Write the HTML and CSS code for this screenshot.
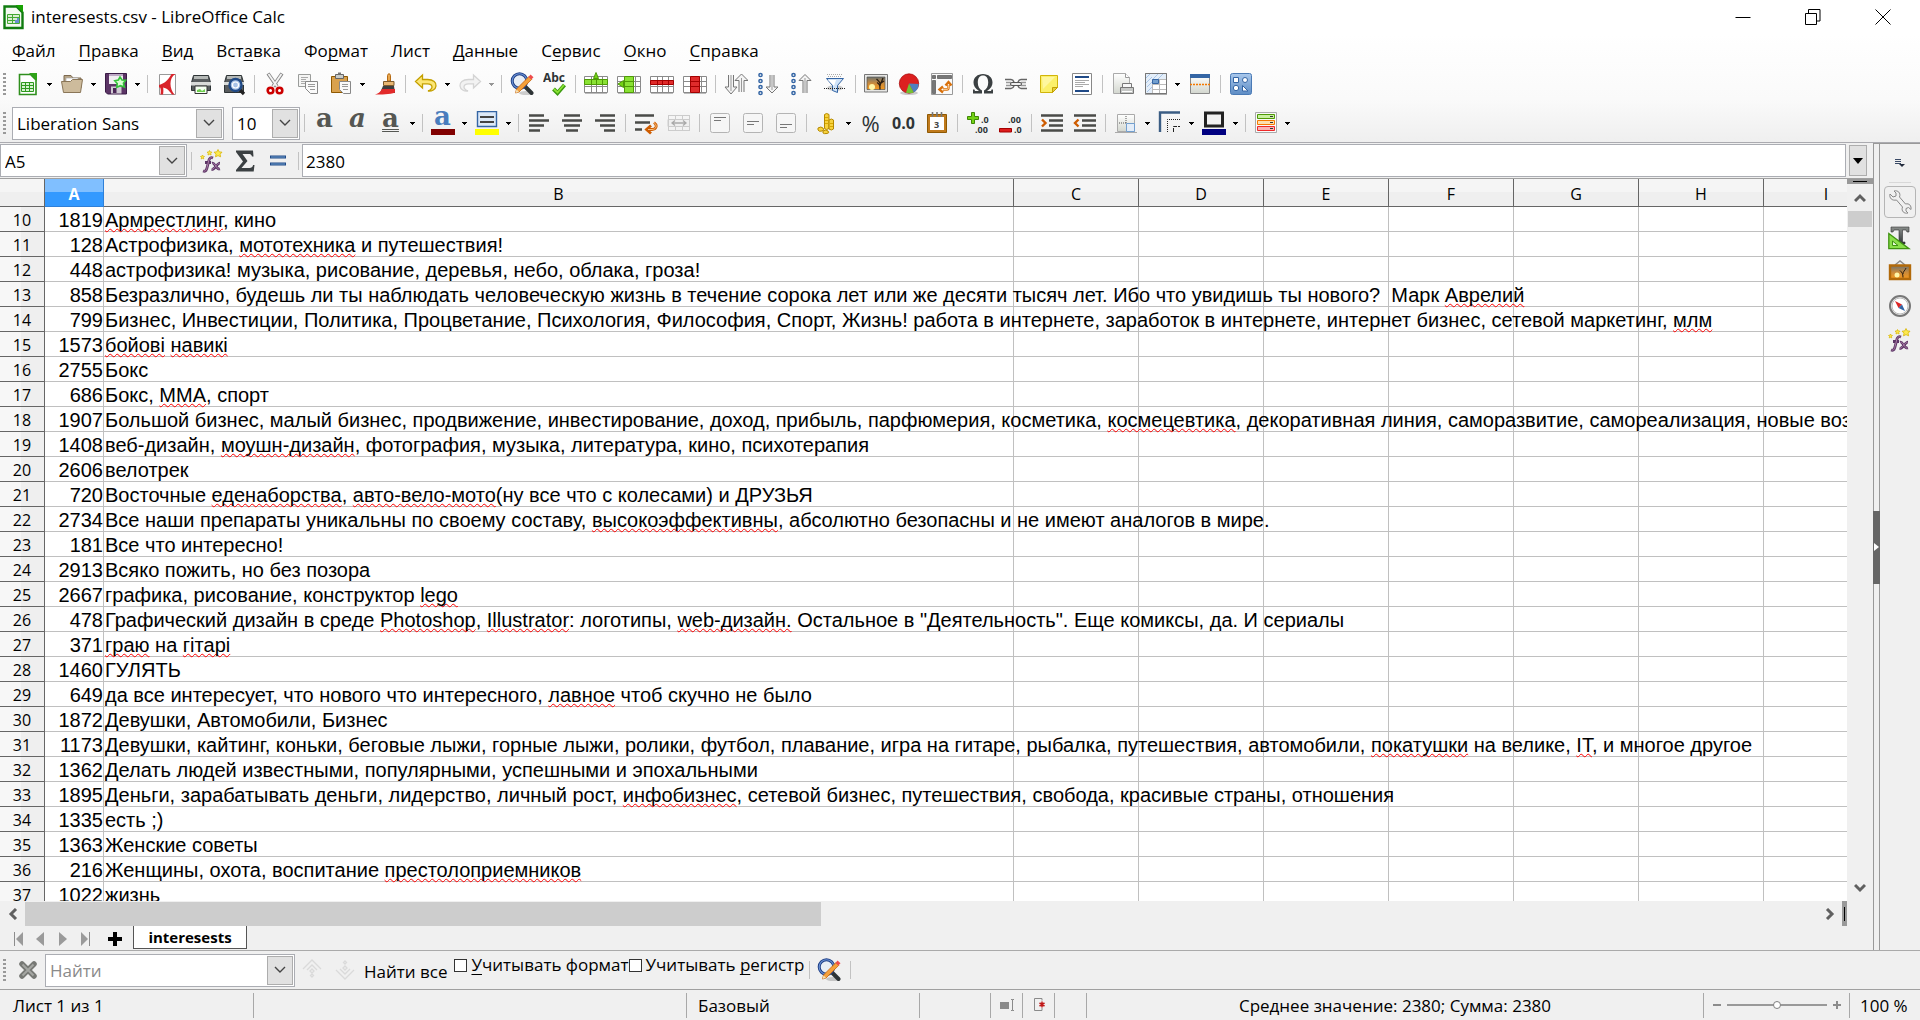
FILE: index.html
```html
<!DOCTYPE html>
<html lang="ru">
<head>
<meta charset="utf-8">
<title>interesests.csv - LibreOffice Calc</title>
<link rel="stylesheet" href="styles.css">
</head>
<body>
<svg class="defs" aria-hidden="true">
  <defs>
    <linearGradient id="g-silver" x1="0" y1="0" x2="0" y2="1"><stop offset="0" stop-color="#fff"/><stop offset="1" stop-color="#d3d7cf"/></linearGradient>
    <linearGradient id="g-blue" x1="0" y1="0" x2="0" y2="1"><stop offset="0" stop-color="#a9c8ec"/><stop offset="1" stop-color="#5d8cc4"/></linearGradient>
    <linearGradient id="g-sunset" x1="0" y1="0" x2="0" y2="1"><stop offset="0" stop-color="#6f7470"/><stop offset=".5" stop-color="#c98a3c"/><stop offset="1" stop-color="#f79a1d"/></linearGradient>
    <linearGradient id="g-dark" x1="0" y1="0" x2="0" y2="1"><stop offset="0" stop-color="#8b8f8c"/><stop offset="1" stop-color="#2e3436"/></linearGradient>
  </defs>
  <symbol id="i-arrow" viewBox="0 0 5 3"><path d="M0 0h5v1H4v1H3v1H2V2H1V1H0z"/></symbol>
  <symbol id="i-chevron" viewBox="0 0 12 8"><path d="M1 1l5 5 5-5" fill="none" stroke="#444" stroke-width="1.4"/></symbol>
  <symbol id="i-fx" viewBox="0 0 24 24">
    <path d="M3 22c3 1 3.600-1 4.500-5l1.500-6c.6-2 2-3 4-2M5 13.500h6" fill="none" stroke="#5c3566" stroke-width="2.800"/>
    <path d="M12 14c3-1 4 7 8 6M20 14c-3 0-5 7-8.500 6.500" fill="none" stroke="#5c3566" stroke-width="2.600"/>
    <path d="M3.500 22c2.500.6 3-1 3.900-5l1.500-6c.6-2 2-2.600 3.500-2M12.500 14.300c3-.6 4 6.500 7 5.700M19.500 14.400c-3 0-5 6-7.500 5.800" fill="none" stroke="#ad7fa8" stroke-width="1"/>
    <path d="M18 .5l1.300 2.400 2.700.3-1.900 2 .5 2.600L18 6.600l-2.500 1.200.5-2.600-1.900-2 2.600-.3z" fill="#fce94f" stroke="#d8b400" stroke-width=".8"/>
    <path d="M9.500 1.500l.8 1.500 1.700.2-1.200 1.200.3 1.600-1.600-.7-1.500.7.300-1.600L7 3.200 8.700 3zM2.500 6l.7 1.300 1.300.2-1 1 .2 1.400-1.200-.6-1.300.6.3-1.400-1-1L1.800 7.300z" fill="#fce94f" stroke="#d8b400" stroke-width=".7"/>
  </symbol>
  <symbol id="i-find" viewBox="0 0 24 24">
    <ellipse cx="16" cy="21" rx="7" ry="2" fill="#000" opacity=".18"/>
    <path d="M15 14.500l6.500 6.500" stroke="#2e3436" stroke-width="4" stroke-linecap="round"/>
    <circle cx="9.500" cy="9" r="7.300" fill="#e8eef6" stroke="#1f3f86" stroke-width="3"/>
    <circle cx="9.500" cy="9" r="7.300" fill="none" stroke="#6b92d6" stroke-width="1.100"/>
    <path d="M5.500 21l1-4L19 4.500l2.800 2.800L9 20z" fill="#f5a03a" stroke="#c4620c" stroke-width=".8"/>
    <path d="M18.500 5l2-2.400 3 2.600-2.200 2.400z" fill="#ef4b4b"/><path d="M5.500 21l1-3.500 2.500 2.300z" fill="#f3e2b8"/>
  </symbol>
  <symbol id="i-grid" viewBox="0 0 24 24"><path d="M.5 4.500h23v16H.5zM.5 9.500h23M.5 14.500h23M7.500 4.500v16M12.500 4.500v16M18.500 4.500v16" fill="#fff" stroke="#8a8a8a" stroke-width="1"/><path d="M1 21.500h22" stroke="#bbb"/></symbol>
</svg>

<header class="top">
  <div class="titlebar">
    <svg class="app-icon" viewBox="0 0 22 26"><path d="M1.500 2.500h12l6 6v15.500h-18z" fill="#f4faf2" stroke="#107c10" stroke-width="2.400"/><path d="M12.500 1h7.500v7.500z" fill="#18a303"/><path d="M4.500 10.500h12v9h-12zM4.500 13.500h12M4.500 16.500h12M9.500 10.500v9" fill="#d9f0d2" stroke="#43a833"/><path d="M12 19v-3h2v-2h2v5z" fill="#6a8fd0"/></svg>
    <h1 class="title">interesests.csv - LibreOffice Calc</h1>
    <button class="win" aria-label="Свернуть"><svg viewBox="0 0 16 16"><path d="M.5 8.500h15" stroke="#000"/></svg></button>
    <button class="win" aria-label="Восстановить"><svg viewBox="0 0 16 16"><path d="M.5 4.500h11v11H.5zM3.500 4V.5h11.500v11.500h-3" fill="none" stroke="#000"/></svg></button>
    <button class="win" aria-label="Закрыть"><svg viewBox="0 0 16 16"><path d="M.5.5l15 15M15.500.5l-15 15" stroke="#000"/></svg></button>
  </div>
  <nav class="menubar">
    <button><u>Ф</u>айл</button><button><u>П</u>равка</button><button><u>В</u>ид</button><button>Вст<u>а</u>вка</button><button>Фо<u>р</u>мат</button><button>Лист</button><button><u>Д</u>анные</button><button>С<u>е</u>рвис</button><button><u>О</u>кно</button><button><u>С</u>правка</button>
  </nav>

  <div class="toolbar" role="toolbar" aria-label="Стандартная">
    <span class="grip"></span>
    <button class="tool" aria-label="Создать"><svg viewBox="0 0 24 24"><path d="M3.500 2.500h11l5.500 5.500v14.500h-16.500z" fill="#fff" stroke="#2f8f1d" stroke-width="1.600"/><path d="M13 1h8v8z" fill="#2fa318"/><path d="M5.500 10.500h12v9h-12zM5.500 13.500h12M5.500 16.500h12M9.500 10.500v9M13.500 10.500v9" fill="#d5f3cf" stroke="#2f9a1f"/></svg></button><button class="drop" aria-label="Создать: ещё"><svg><use href="#i-arrow"/></svg></button>
    <button class="tool" aria-label="Открыть"><svg viewBox="0 0 24 24"><path d="M4 5V3.500h7L13 6h8v10H4z" fill="#b7a587" stroke="#7d6a50"/><path d="M6 6h12v8H6z" fill="#fff" stroke="#aaa" stroke-width=".7"/><path d="M1.500 9.500h9l2-2h10L20.500 20.500h-17z" fill="#cdbb9c" stroke="#8a7658"/></svg></button><button class="drop" aria-label="Открыть: ещё"><svg><use href="#i-arrow"/></svg></button>
    <button class="tool" aria-label="Сохранить"><svg viewBox="0 0 24 24"><path d="M1.500 1.500h21v20.500H3.500l-2-2z" fill="#5c3566" stroke="#3b1c47"/><path d="M5 2h14v10H5z" fill="#f1eef2"/><path d="M5 2h14v2H5z" fill="#bda9c5"/><path d="M7 14.500h10.500v7H7z" fill="#d0cbd3"/><path d="M9 16h3.500v5H9z" fill="#4a2756"/><path d="M16 5l2 3 3.600.3-2.200 2.900 1 3.800-4-1.300-3.600 1.600.4-3.800-2.400-2.800 3.600-.7z" fill="#d9ffd2" stroke="#35c33a" stroke-width="1.600"/></svg></button><button class="drop" aria-label="Сохранить: ещё"><svg><use href="#i-arrow"/></svg></button>
    <span class="sep"></span>
    <button class="tool" aria-label="Экспорт в PDF"><svg viewBox="0 0 24 24"><path d="M3.500 2.500h16v20h-16z" fill="#fff" stroke="#999"/><path d="M19.500 2C12.500 6 13.500 17 18.500 22.500h-2.500C12 17 10.500 15 3 15.500v-2.500C9 11.500 13 7 15.500 2z" fill="#d9232a"/><path d="M3.500 13.500C5 17 5 19 4.500 22.500h2.500c.5-3 .5-5 0-8z" fill="#d9232a"/></svg></button>
    <button class="tool" aria-label="Печать"><svg viewBox="0 0 24 24"><path d="M4.500 3.500h15l2 7v8h-19v-8z" fill="#585c5e" stroke="#2e3436"/><path d="M5 4h14v3H5z" fill="#b4b8b6"/><path d="M2 10h20v3.500H2z" fill="#d8dad8"/><path d="M6 14h12v7.500H6z" fill="#f5fff2" stroke="#333"/><path d="M8 18l3-1 2 2 3-2v3H8z" fill="#6fcf4f"/></svg></button>
    <button class="tool" aria-label="Просмотр печати"><svg viewBox="0 0 24 24"><path d="M4.500 3.500h15l2 7v10h-19v-10z" fill="#585c5e" stroke="#2e3436"/><path d="M5 4h14v3H5z" fill="#b4b8b6"/><path d="M2 10h20v3H2z" fill="#d8dad8"/><path d="M17 17l5 5" stroke="#222" stroke-width="3.200"/><circle cx="13.500" cy="13" r="6" fill="#a9c3e8" stroke="#204a87" stroke-width="2.400"/><circle cx="13.500" cy="13" r="3" fill="none" stroke="#fff" stroke-width="1.200"/></svg></button>
    <span class="sep"></span>
    <button class="tool" aria-label="Вырезать"><svg viewBox="0 0 24 24"><path d="M5 1.500l9 13M19 1.500l-9 13" stroke="#888" stroke-width="3.600"/><path d="M5.500 2l8.500 12.500M18.500 2L10 14.500" stroke="#f4f4f4" stroke-width="1.800"/><circle cx="7.500" cy="18.500" r="2.800" fill="#fff" stroke="#cc0000" stroke-width="2.600"/><circle cx="16.500" cy="18.500" r="2.800" fill="#fff" stroke="#cc0000" stroke-width="2.600"/></svg></button>
    <button class="tool" aria-label="Копировать"><svg viewBox="0 0 24 24"><path d="M2.500 2.500h12v12h-12z" fill="#f5f5f4" stroke="#9a9c9a"/><path d="M5 5.500h7M5 7.500h5M5 9.500h7M5 11.500h4" stroke="#aaa"/><path d="M9.500 9.500h12v12h-7l-5-5z" fill="#fafafa" stroke="#888"/><path d="M12 12.500h7M12 14.500h7M14 17.500h5" stroke="#999"/></svg></button>
    <button class="tool" aria-label="Вставить"><svg viewBox="0 0 24 24"><path d="M2.500 4.500h16v16h-16z" fill="#d9a14d" stroke="#8f5902"/><path d="M6.500 2.500h8v4h-8z" fill="#c9ccc9" stroke="#666"/><path d="M9 1.500h3" stroke="#777" stroke-width="2"/><path d="M10.500 9.500h11v12h-7l-4-4z" fill="#fafafa" stroke="#888"/><path d="M13 12.500h6M13 14.500h6M14 17.500h5" stroke="#999"/></svg></button><button class="drop" aria-label="Вставить: ещё"><svg><use href="#i-arrow"/></svg></button>
    <button class="tool" aria-label="Копировать форматирование"><svg viewBox="0 0 24 24"><path d="M14.500 9V3.500q1.500-4 3 0V9z" fill="#e9a64c" stroke="#b56a14"/><path d="M10.500 9.500h10.500v4H10.500z" fill="#e8b672" stroke="#7c5a2c"/><path d="M10 14h11l1 7H7z" fill="#3d3f40"/><path d="M9 17h13v3.500c-5 2-14 2-20 2 3-1 5-2 7-5.500z" fill="#e22a2a"/></svg></button>
    <span class="sep"></span>
    <button class="tool" aria-label="Отменить"><svg viewBox="0 0 24 24"><path d="M8.500 3v4.500h5c6 0 9 3 8.500 6.500-.4 3.500-4 5.500-8 5 2-.8 4-2 4-4 0-2.500-2-3.200-4.500-3.200h-5V16L1.500 9.500z" fill="#fce675" stroke="#c4a000" stroke-width="1.300"/></svg></button><button class="drop" aria-label="Отменить: ещё"><svg><use href="#i-arrow"/></svg></button>
    <button class="tool" aria-label="Вернуть" disabled><svg viewBox="0 0 24 24"><path d="M15.500 3v4.500h-5c-6 0-9 3-8.500 6.500.4 3.500 4 5.500 8 5-2-.8-4-2-4-4 0-2.500 2-3.200 4.500-3.200h5V16l7-6.500z" fill="#f2f2f2" stroke="#d4d4d4" stroke-width="1.300"/></svg></button><button class="drop" aria-label="Вернуть: ещё" disabled><svg><use href="#i-arrow"/></svg></button>
    <span class="sep"></span>
    <button class="tool" aria-label="Найти и заменить"><svg><use href="#i-find"/></svg></button>
    <button class="tool" aria-label="Орфография"><svg viewBox="0 0 24 24"><text x="0" y="10" class="abc">Abc</text><path d="M10.500 17l4 4 7-8" fill="none" stroke="#3c9a10" stroke-width="4"/><path d="M10.800 17l3.700 3.500 6.500-7.500" fill="none" stroke="#8ae234" stroke-width="1.800"/></svg></button>
    <span class="sep"></span>
    <button class="tool" aria-label="Вставить строку"><svg viewBox="0 0 24 24"><use href="#i-grid"/><path d="M.5 7.500h23v5H.5zM7.500 7.500v5M12.500 7.500v5M18.500 7.500v5" fill="#8ae234" stroke="#4e9a06"/><path d="M9.500 6.500l2.500-6 2.500 6z" fill="#73d216" stroke="#4e9a06"/></svg></button>
    <button class="tool" aria-label="Вставить столбец"><svg viewBox="0 0 24 24"><use href="#i-grid"/><path d="M7.500 4.500h9v16h-9zM7.500 9.500h9M7.500 14.500h9" fill="#8ae234" stroke="#4e9a06"/><path d="M6.500 8.500v7l-5.500-3.500z" fill="#73d216" stroke="#4e9a06"/></svg></button>
    <button class="tool" aria-label="Удалить строку"><svg viewBox="0 0 24 24"><use href="#i-grid"/><path d="M.5 8.500h23v4H.5zM7.500 8.500v4M12.500 8.500v4M18.500 8.500v4" fill="#e02b2b" stroke="#a40000"/></svg></button>
    <button class="tool" aria-label="Удалить столбец"><svg viewBox="0 0 24 24"><use href="#i-grid"/><path d="M7.500 4.500h9v16h-9zM7.500 9.500h9M7.500 14.500h9" fill="#e02b2b" stroke="#a40000"/></svg></button>
    <span class="sep"></span>
    <button class="tool" aria-label="Сортировка"><svg viewBox="0 0 24 24"><path d="M4.500 3v12H1l6 7 6-7H9.500V3" fill="#f4f4f4" stroke="#777"/><path d="M15 20V8.500h-4L17.500 2 24 8.500h-4V20" fill="#f4f4f4" stroke="#777"/><path d="M7 3v16M17.500 6v14" stroke="#999"/></svg></button>
    <button class="tool" aria-label="По возрастанию"><svg viewBox="0 0 24 24"><g fill="#fff" stroke="#3465a4" stroke-width="1.500"><circle cx="3.500" cy="3" r="1.600"/><circle cx="3.500" cy="9" r="1.600"/><circle cx="3.500" cy="15" r="1.600"/><circle cx="3.500" cy="21" r="1.600"/></g><path d="M13 3v12H9l6 6 6-6h-4V3" fill="#f4f4f4" stroke="#777"/><path d="M15 3v15" stroke="#999"/></svg></button>
    <button class="tool" aria-label="По убыванию"><svg viewBox="0 0 24 24"><g fill="#fff" stroke="#3465a4" stroke-width="1.500"><circle cx="3.500" cy="3" r="1.600"/><circle cx="3.500" cy="9" r="1.600"/><circle cx="3.500" cy="15" r="1.600"/><circle cx="3.500" cy="21" r="1.600"/></g><path d="M13 21V8.500H9l6-6 6 6h-4V21" fill="#f4f4f4" stroke="#777"/><path d="M15 6v15" stroke="#999"/></svg></button>
    <button class="tool" aria-label="Автофильтр"><svg viewBox="0 0 24 24"><path d="M4 2.500h16M5 4.500h14" stroke="#aaa" stroke-dasharray="1 1"/><ellipse cx="12" cy="16" rx="8" ry="3" fill="#ccc"/><path d="M3.500 6.500h17l-6 7v7l-5-2v-5z" fill="#cfe2f7" stroke="#3465a4"/><path d="M5 8h8l-2 6z" fill="#fff"/><path d="M1 16.500h22" stroke="#222" stroke-dasharray="1 1"/></svg></button>
    <span class="sep"></span>
    <button class="tool" aria-label="Изображение"><svg viewBox="0 0 24 24"><path d="M.5 2.500h23v17.500H.5z" fill="#e6e6e4" stroke="#777"/><path d="M3 5h18v12.500H3z" fill="url(#g-sunset)" stroke="#555" stroke-width=".7"/><circle cx="8" cy="15" r="3" fill="#fff6a8"/><path d="M16 17.500c0-4 0-5-3-7M16 14c0-3 2-4 3-8M16.500 12c-1-3-3-4-4-5M17 11l3-2" stroke="#2b1d10" fill="none" stroke-width="1.300"/></svg></button>
    <button class="tool" aria-label="Диаграмма"><svg viewBox="0 0 24 24"><ellipse cx="12" cy="21" rx="9" ry="2" fill="#ccc"/><circle cx="12" cy="11.500" r="9.700" fill="#dc2020" stroke="#a40000" stroke-width=".7"/><path d="M12 11.500l9.700.5c0 4-2 7-5 8.500z" fill="#4f7fc0"/><path d="M12 11.500l4.700 9c-2.500 1-5 1-7.700.3z" fill="#73c232"/></svg></button>
    <button class="tool" aria-label="Сводная таблица"><svg viewBox="0 0 24 24"><path d="M1.500 1.500h21v21h-21z" fill="#fafafa" stroke="#999"/><path d="M2.500 3.500h3v3h-3zM7.500 3.500h14v3h-14zM2.500 8.500h3v13h-3z" fill="#777" stroke="#555" stroke-width=".7"/><path d="M13 17.500h4q1.500 0 1.500-2V13M13 14.500l-3.500 3 3.500 3M15.500 13.500l3-3.500 3 3.500" fill="none" stroke="#d9700a" stroke-width="2.400"/><path d="M13 17.500h4q1.500 0 1.500-2V13" fill="none" stroke="#ffd9a8" stroke-width=".8"/></svg></button>
    <span class="sep"></span>
    <button class="tool" aria-label="Специальный символ"><svg viewBox="0 0 24 24"><path d="M2 21.500v-4h1.500l.5 1.500h4C4 16.500 2.500 13.500 2.500 10.500 2.500 5.500 6.500 2 12 2s9.500 3.500 9.500 8.500c0 3-1.500 6-5.500 8.500h4l.5-1.500H22v4h-9v-3c2.600-1.500 4.200-4 4.200-8 0-4.500-2-7-5.200-7s-5.200 2.500-5.200 7c0 4 1.600 6.500 4.200 8v3z" fill="#3b4042"/></svg></button>
    <button class="tool" aria-label="Гиперссылка"><svg viewBox="0 0 24 24"><path d="M1 7.500h6q2 0 3 2.500M1 16.500h6q2 0 3-2.500M23 7.500h-6q-2 0-3 2.500M23 16.500h-6q-2 0-3-2.500" fill="none" stroke="#666" stroke-width="1.500"/><path d="M2 10.500h5M2 13.500h5M22 10.500h-5M22 13.500h-5" stroke="#999" stroke-width="1.500"/><rect x="6.500" y="10.500" width="11" height="3" rx="1.500" fill="#eee" stroke="#555"/></svg></button>
    <button class="tool" aria-label="Комментарий"><svg viewBox="0 0 24 24"><path d="M3.500 3.500h17v12l-5 5h-12z" fill="#fbf06a" stroke="#d1b40a"/><path d="M20.500 15.500h-5v5z" fill="#e3cf3d" stroke="#c4a000"/><path d="M5 5h13L6 17z" fill="#fff9b5" opacity=".7"/></svg></button>
    <button class="tool" aria-label="Колонтитулы"><svg viewBox="0 0 24 24"><path d="M2.500 1.500h19v21h-19z" fill="#fff" stroke="#888"/><path d="M5 5h14M5 19h14" stroke="#204a87" stroke-width="2"/><path d="M5 8.500h14M5 10.500h10M5 12.500h14M5 14.500h8" stroke="#aaa"/></svg></button>
    <span class="sep"></span>
    <button class="tool" aria-label="Область печати"><svg viewBox="0 0 24 24"><path d="M2.500 1.500h12l4 4v16h-16z" fill="url(#g-silver)" stroke="#aaa"/><path d="M14.500 1.500v4h4" fill="#fff" stroke="#999"/><path d="M11.500 11.500h9v4h-9z" fill="#f6f6f6" stroke="#777"/><path d="M9.500 15.500h13v6h-13z" fill="#c6c8c6" stroke="#777"/><path d="M11 19.500h10" stroke="#fff"/></svg></button>
    <button class="tool" aria-label="Закрепить"><svg viewBox="0 0 24 24"><path d="M1.500 1.500h21v20h-21z" fill="#fff" stroke="#888"/><path d="M2 2h20v5H8v14H2z" fill="#e4eef9"/><path d="M2 6l4-4M2 11l6-6M3 15l5-5M3 20l5-5M9 7l5-5M14 7l5-5" stroke="#a9c6e8"/><path d="M8.500 7v14M8 7.500h14M15.500 7v14M8 12.500h14M8 17.500h14" stroke="#bbb"/><path d="M8.500 7.500h6v4h-6z" fill="#729fcf" stroke="#3465a4"/><path d="M1.500 1.500h21v20h-21z" fill="none" stroke="#777"/><path d="M1 22.500h22" stroke="#aaa"/></svg></button><button class="drop" aria-label="Закрепить: ещё"><svg><use href="#i-arrow"/></svg></button>
    <button class="tool" aria-label="Разделить окно"><svg viewBox="0 0 24 24"><path d="M2.500 2.500h19v19h-19z" fill="url(#g-silver)" stroke="#888"/><path d="M2 2h20v4H2z" fill="#3465a4"/><path d="M2 12.500h20" stroke="#f57900" stroke-width="1.500" stroke-dasharray="2 1"/></svg></button>
    <span class="sep"></span>
    <button class="tool" aria-label="Фигуры"><svg viewBox="0 0 24 24"><rect x="1.500" y="1.500" width="21" height="21" rx="2" fill="url(#g-blue)" stroke="#4a7ab5"/><g fill="#fff" stroke="#3465a4"><path d="M4.500 5.500h5v5h-5z"/><circle cx="16" cy="8" r="2.500"/><circle cx="7" cy="16" r="2.700"/><path d="M13.500 13.500v5.500h5.500z"/></g></svg></button>
  </div>

  <div class="toolbar format" role="toolbar" aria-label="Форматирование">
    <span class="grip"></span>
    <span class="combo font-name"><select aria-label="Имя шрифта"><option>Liberation Sans</option></select><span class="combo-btn"><svg><use href="#i-chevron"/></svg></span></span>
    <span class="combo font-size"><select aria-label="Размер шрифта"><option>10</option></select><span class="combo-btn"><svg><use href="#i-chevron"/></svg></span></span>
    <span class="sep"></span>
    <button class="tool glyph bold" aria-label="Полужирный">a</button>
    <button class="tool glyph italic" aria-label="Курсив">a</button>
    <button class="tool glyph under" aria-label="Подчёркивание">a</button><button class="drop" aria-label="Подчёркивание: ещё"><svg><use href="#i-arrow"/></svg></button>
    <span class="sep"></span>
    <button class="tool glyph color" aria-label="Цвет шрифта">a</button><button class="drop" aria-label="Цвет шрифта: ещё"><svg><use href="#i-arrow"/></svg></button>
    <button class="tool" aria-label="Цвет фона"><svg viewBox="0 0 24 24"><path d="M2.500.5h19v15h-19z" fill="#dce9f8" stroke="#3465a4" stroke-width="1.400"/><path d="M5 6h14M5 11h14" stroke="#444" stroke-width="2"/><path d="M0 18h24v6H0z" fill="#ff0"/></svg></button><button class="drop" aria-label="Цвет фона: ещё"><svg><use href="#i-arrow"/></svg></button>
    <span class="sep"></span>
    <button class="tool" aria-label="По левому краю"><svg viewBox="0 0 24 24"><path d="M2 4.500h15M2 9.500h20M2 14.500h15M2 19.500h11" class="bars"/></svg></button>
    <button class="tool" aria-label="По центру"><svg viewBox="0 0 24 24"><path d="M4 4.500h16M2 9.500h20M4 14.500h16M6 19.500h12" class="bars"/></svg></button>
    <button class="tool" aria-label="По правому краю"><svg viewBox="0 0 24 24"><path d="M7 4.500h15M2 9.500h20M7 14.500h15M11 19.500h11" class="bars"/></svg></button>
    <span class="sep"></span>
    <button class="tool" aria-label="Перенос текста"><svg viewBox="0 0 24 24"><path d="M1 4.500h19M1 11.500h15M1 18.500h7" class="bars"/><path d="M20 11.500c4 3 2 7-2 7h-4M17 14.500l-4.500 4 4.500 4" fill="none" stroke="#ce5c00" stroke-width="2.800"/><path d="M20 11.500c4 3 2 7-2 7h-4" fill="none" stroke="#fcc98c" stroke-width=".9"/></svg></button>
    <button class="tool" aria-label="Объединить ячейки" disabled><svg viewBox="0 0 24 24"><path d="M1.500 4v16M1 4.500h21.500M1 19.500h21.500M22.500 4v16M8.500 4v4M15.500 4v4M8.500 16v4M15.500 16v4M1 8.500h21.500v7H1z" fill="#efefef" stroke="#ccc"/><path d="M5 12h14M8 9.500L5 12l3 2.500M16 9.500l3 2.500-3 2.500" fill="none" stroke="#aaa" stroke-width="1.300"/></svg></button>
    <span class="sep"></span>
    <button class="tool" aria-label="По верхнему краю"><svg viewBox="0 0 24 24"><rect x="2.500" y="2.500" width="19" height="19" rx="2" class="valign"/><path d="M6 6.500h12M6 9.500h7" stroke="#777"/></svg></button>
    <button class="tool" aria-label="По центру по вертикали"><svg viewBox="0 0 24 24"><rect x="2.500" y="2.500" width="19" height="19" rx="2" class="valign"/><path d="M6 10.500h12M6 13.500h7" stroke="#777"/></svg></button>
    <button class="tool" aria-label="По нижнему краю"><svg viewBox="0 0 24 24"><rect x="2.500" y="2.500" width="19" height="19" rx="2" class="valign"/><path d="M6 13.500h12M6 16.500h7" stroke="#777"/></svg></button>
    <span class="sep"></span>
    <button class="tool" aria-label="Денежный"><svg viewBox="0 0 24 24"><path d="M9.500 3.500q2-2 4.500 0v14q-2.500 2-4.500 0z" fill="#f7d23e" stroke="#b58900"/><path d="M14 9q2.500-2 4.500 0v9q-2 2-4.500 0zM3 17q3-2 5 0t-1 3-4-1zM8 20q3-2 5 0t-1 2.500-4-.5z" fill="#f7d23e" stroke="#b58900"/><path d="M10 6.500h3.500M10 9.500h3.500M10 12.500h3.500M15 12.500h3M15 15.500h3" stroke="#d8a800"/></svg></button><button class="drop" aria-label="Денежный: ещё"><svg><use href="#i-arrow"/></svg></button>
    <button class="tool percent" aria-label="Процентный">%</button>
    <button class="tool number" aria-label="Числовой">0.0</button>
    <button class="tool" aria-label="Дата"><svg viewBox="0 0 24 24"><path d="M2.500 3.500h19v18h-19z" fill="#c07a1c" stroke="#8f5902"/><path d="M5 6h14v13H5z" fill="#fff"/><path d="M7.500 1v5M12 1v5M16.500 1v5" stroke="#777" stroke-width="1.600"/><text x="9" y="17" class="tiny">3</text></svg></button>
    <span class="sep"></span>
    <button class="tool" aria-label="Добавить разряд"><svg viewBox="0 0 24 24"><path d="M5.500 1.500h3v4h4v3h-4v4h-3v-4h-4v-3h4z" fill="#73d216" stroke="#3f8705"/><text x="15" y="12" class="dec">.0</text><text x="9" y="22" class="dec">.00</text></svg></button>
    <button class="tool" aria-label="Удалить разряд"><svg viewBox="0 0 24 24"><path d="M.5 17.500h12v3.500h-12z" fill="#dd1c1c" stroke="#a40000"/><text x="9" y="12" class="dec">.00</text><text x="15" y="22" class="dec">.0</text></svg></button>
    <span class="sep"></span>
    <button class="tool" aria-label="Увеличить отступ"><svg viewBox="0 0 24 24"><path d="M1 4.500h22M9 9.500h14M9 14.500h14M1 19.500h22" class="bars"/><path d="M2 8.500l3.500 3.500L2 15.500" fill="none" stroke="#ce5c00" stroke-width="2.400"/></svg></button>
    <button class="tool" aria-label="Уменьшить отступ"><svg viewBox="0 0 24 24"><path d="M1 4.500h22M9 9.500h14M9 14.500h14M1 19.500h22" class="bars"/><path d="M5.500 8.500L2 12l3.500 3.500" fill="none" stroke="#ce5c00" stroke-width="2.400"/></svg></button>
    <span class="sep"></span>
    <button class="tool" aria-label="Обрамление"><svg viewBox="0 0 24 24"><path d="M3.500 3.500h17v17h-17z" fill="url(#g-silver)" stroke="#aaa"/><path d="M12 5v7M5 12h7" stroke="#555" stroke-dasharray="1 1"/><path d="M12.500 12.500h8v8h-8z" fill="#e4edf8" stroke="#729fcf"/><path d="M1 21.500h22" stroke="#aaa"/></svg></button><button class="drop" aria-label="Обрамление: ещё"><svg><use href="#i-arrow"/></svg></button>
    <button class="tool" aria-label="Стиль обрамления"><svg viewBox="0 0 24 24"><path d="M2 21V1.500h20" fill="none" stroke="#3b5d84" stroke-width="2.400"/><path d="M9.500 21V8.500H22" fill="none" stroke="#222" stroke-dasharray="1 1"/><path d="M15.500 21v-5.500H22" fill="none" stroke="#222" stroke-dasharray="4 1"/></svg></button><button class="drop" aria-label="Стиль обрамления: ещё"><svg><use href="#i-arrow"/></svg></button>
    <button class="tool" aria-label="Цвет обрамления"><svg viewBox="0 0 24 24"><path d="M3.500 2h17v13h-17z" fill="#f2f2f2" stroke="#222" stroke-width="3"/><path d="M0 18h24v6H0z" fill="#000080"/></svg></button><button class="drop" aria-label="Цвет обрамления: ещё"><svg><use href="#i-arrow"/></svg></button>
    <span class="sep"></span>
    <button class="tool" aria-label="Условное форматирование"><svg viewBox="0 0 24 24"><path d="M1.500 1.500h21v20h-21z" fill="#fafafa" stroke="#aaa"/><path d="M3.500 3.500h17v4h-17z" fill="#c9f0a0" stroke="#4e9a06"/><path d="M3.500 9.500h17v4h-17z" fill="#fde0b0" stroke="#f57900"/><path d="M3.500 15.500h17v4h-17z" fill="#f9b4b4" stroke="#ef2929"/><path d="M16 5.500h3M16 11.500h3M16 17.500h3" stroke="#333"/></svg></button><button class="drop" aria-label="Условное форматирование: ещё"><svg><use href="#i-arrow"/></svg></button>
  </div>
</header>

<div class="workspace">
  <main class="document">
    <div class="formula-bar">
      <span class="combo name-box"><input type="text" value="A5" aria-label="Область"><button class="combo-btn" aria-label="Список имён"><svg><use href="#i-chevron"/></svg></button></span>
      <span class="sep"></span>
      <button class="tool" aria-label="Мастер функций"><svg><use href="#i-fx"/></svg></button>
      <button class="tool" aria-label="Сумма"><svg viewBox="0 0 24 24"><path d="M3 1.500h17l.5 6H19c-.6-2-1.500-2.500-3.500-2.500H9.500l5 7-6 7h8c2 0 3-.8 3.600-3h1.400l-.8 6.500H3v-1.500l7-8.500L3 3z" fill="#3b4042"/></svg></button>
      <button class="tool" aria-label="Формула"><svg viewBox="0 0 24 24"><path d="M4 8h16M4 15h16" stroke="#204a87" stroke-width="3"/><path d="M5 8h14M5 15h14" stroke="#729fcf"/></svg></button>
      <span class="sep"></span>
      <input class="formula" type="text" value="2380" aria-label="Строка ввода">
      <button class="expand" aria-label="Развернуть"><svg viewBox="0 0 10 6"><path d="M0 0h10L5 6z"/></svg></button>
    </div>

    <div class="sheet">
      <div class="cells">
        <table>
          <colgroup><col class="c-head"><col class="c-a"><col class="c-b"><col class="c-n"><col class="c-n"><col class="c-n"><col class="c-n"><col class="c-n"><col class="c-n"><col class="c-n"></colgroup>
          <thead><tr><th class="corner"></th><th class="selected">A</th><th>B</th><th>C</th><th>D</th><th>E</th><th>F</th><th>G</th><th>H</th><th>I</th></tr></thead>
          <tbody>
          <tr><th>10</th><td>1819</td><td><s>Армрестлинг</s>, кино</td><td></td><td></td><td></td><td></td><td></td><td></td><td></td></tr>
          <tr><th>11</th><td>128</td><td>Астрофизика, <s>мототехника</s> и путешествия!</td><td></td><td></td><td></td><td></td><td></td><td></td><td></td></tr>
          <tr><th>12</th><td>448</td><td>астрофизика! музыка, рисование, деревья, небо, облака, гроза!</td><td></td><td></td><td></td><td></td><td></td><td></td><td></td></tr>
          <tr><th>13</th><td>858</td><td>Безразлично, будешь ли ты наблюдать человеческую жизнь в течение сорока лет или же десяти тысяч лет. Ибо что увидишь ты нового?&nbsp; Марк <s>Аврелий</s></td><td></td><td></td><td></td><td></td><td></td><td></td><td></td></tr>
          <tr><th>14</th><td>799</td><td>Бизнес, Инвестиции, Политика, Процветание, Психология, Философия, Спорт, Жизнь! работа в интернете, заработок в интернете, интернет бизнес, сетевой маркетинг, <s>млм</s></td><td></td><td></td><td></td><td></td><td></td><td></td><td></td></tr>
          <tr><th>15</th><td>1573</td><td><s>бойові</s> <s>навикі</s></td><td></td><td></td><td></td><td></td><td></td><td></td><td></td></tr>
          <tr><th>16</th><td>2755</td><td>Бокс</td><td></td><td></td><td></td><td></td><td></td><td></td><td></td></tr>
          <tr><th>17</th><td>686</td><td>Бокс, <s>ММА</s>, спорт</td><td></td><td></td><td></td><td></td><td></td><td></td><td></td></tr>
          <tr><th>18</th><td>1907</td><td>Большой бизнес, малый бизнес, продвижение, инвестирование, доход, прибыль, парфюмерия, косметика, <s>космецевтика</s>, декоративная линия, саморазвитие, самореализация, новые возможности</td><td></td><td></td><td></td><td></td><td></td><td></td><td></td></tr>
          <tr><th>19</th><td>1408</td><td>веб-дизайн, <s>моушн-дизайн</s>, фотография, музыка, литература, кино, психотерапия</td><td></td><td></td><td></td><td></td><td></td><td></td><td></td></tr>
          <tr><th>20</th><td>2606</td><td>велотрек</td><td></td><td></td><td></td><td></td><td></td><td></td><td></td></tr>
          <tr><th>21</th><td>720</td><td>Восточные <s>еденаборства</s>, <s>авто-вело-мото</s>(ну все что с колесами) и ДРУЗЬЯ</td><td></td><td></td><td></td><td></td><td></td><td></td><td></td></tr>
          <tr><th>22</th><td>2734</td><td>Все наши препараты уникальны по своему составу, <s>высокоэффективны</s>, абсолютно безопасны и не имеют аналогов в мире.</td><td></td><td></td><td></td><td></td><td></td><td></td><td></td></tr>
          <tr><th>23</th><td>181</td><td>Все что интересно!</td><td></td><td></td><td></td><td></td><td></td><td></td><td></td></tr>
          <tr><th>24</th><td>2913</td><td>Всяко пожить, но без позора</td><td></td><td></td><td></td><td></td><td></td><td></td><td></td></tr>
          <tr><th>25</th><td>2667</td><td>графика, рисование, конструктор <s>lego</s></td><td></td><td></td><td></td><td></td><td></td><td></td><td></td></tr>
          <tr><th>26</th><td>478</td><td>Графический дизайн в среде <s>Photoshop</s>, <s>Illustrator</s>: логотипы, <s>web-дизайн.</s> Остальное в "Деятельность". Еще комиксы, да. И сериалы</td><td></td><td></td><td></td><td></td><td></td><td></td><td></td></tr>
          <tr><th>27</th><td>371</td><td><s>граю</s> на <s>гітарі</s></td><td></td><td></td><td></td><td></td><td></td><td></td><td></td></tr>
          <tr><th>28</th><td>1460</td><td>ГУЛЯТЬ</td><td></td><td></td><td></td><td></td><td></td><td></td><td></td></tr>
          <tr><th>29</th><td>649</td><td>да все интересует, что нового что интересного, <s>лавное</s> чтоб скучно не было</td><td></td><td></td><td></td><td></td><td></td><td></td><td></td></tr>
          <tr><th>30</th><td>1872</td><td>Девушки, Автомобили, Бизнес</td><td></td><td></td><td></td><td></td><td></td><td></td><td></td></tr>
          <tr><th>31</th><td>1173</td><td>Девушки, кайтинг, коньки, беговые лыжи, горные лыжи, ролики, футбол, плавание, игра на гитаре, рыбалка, путешествия, автомобили, <s>покатушки</s> на велике, <s>IT</s>, и многое другое</td><td></td><td></td><td></td><td></td><td></td><td></td><td></td></tr>
          <tr><th>32</th><td>1362</td><td>Делать людей известными, популярными, успешными и эпохальными</td><td></td><td></td><td></td><td></td><td></td><td></td><td></td></tr>
          <tr><th>33</th><td>1895</td><td>Деньги, зарабатывать деньги, лидерство, личный рост, <s>инфобизнес</s>, сетевой бизнес, путешествия, свобода, красивые страны, отношения</td><td></td><td></td><td></td><td></td><td></td><td></td><td></td></tr>
          <tr><th>34</th><td>1335</td><td>есть ;)</td><td></td><td></td><td></td><td></td><td></td><td></td><td></td></tr>
          <tr><th>35</th><td>1363</td><td>Женские советы</td><td></td><td></td><td></td><td></td><td></td><td></td><td></td></tr>
          <tr><th>36</th><td>216</td><td>Женщины, охота, воспитание <s>престолоприемников</s></td><td></td><td></td><td></td><td></td><td></td><td></td><td></td></tr>
          <tr><th>37</th><td>1022</td><td>жизнь</td><td></td><td></td><td></td><td></td><td></td><td></td><td></td></tr>
          </tbody>
        </table>
      </div>
      <div class="vscroll">
        <span class="vsplit"></span>
        <button class="scroll-btn" aria-label="Вверх"><svg viewBox="0 0 12 12"><path d="M1 9l5-5 5 5" fill="none" stroke="#606060" stroke-width="3"/></svg></button>
        <span class="thumb"></span>
        <span class="track"></span>
        <button class="scroll-btn" aria-label="Вниз"><svg viewBox="0 0 12 12"><path d="M1 3l5 5 5-5" fill="none" stroke="#606060" stroke-width="3"/></svg></button>
      </div>
    </div>

    <div class="hscroll">
      <button class="scroll-btn" aria-label="Влево"><svg viewBox="0 0 12 12"><path d="M9 1L4 6l5 5" fill="none" stroke="#606060" stroke-width="3"/></svg></button>
      <span class="track"><span class="thumb"></span></span>
      <button class="scroll-btn" aria-label="Вправо"><svg viewBox="0 0 12 12"><path d="M3 1l5 5-5 5" fill="none" stroke="#606060" stroke-width="3"/></svg></button>
      <span class="hsplit"></span>
    </div>

    <div class="tabs">
      <button class="nav" aria-label="Первый лист"><svg viewBox="0 0 12 14"><path d="M1.500 0v14" stroke="#8c8c8c"/><path d="M10 0v14L3 7z" fill="#9a9a9a"/></svg></button>
      <button class="nav" aria-label="Предыдущий лист"><svg viewBox="0 0 12 14"><path d="M9 0v14L1 7z" fill="#9a9a9a"/></svg></button>
      <button class="nav" aria-label="Следующий лист"><svg viewBox="0 0 12 14"><path d="M2 0v14l8-7z" fill="#9a9a9a"/></svg></button>
      <button class="nav" aria-label="Последний лист"><svg viewBox="0 0 12 14"><path d="M10.500 0v14" stroke="#8c8c8c"/><path d="M2 0v14l7-7z" fill="#9a9a9a"/></svg></button>
      <button class="add" aria-label="Добавить лист"><svg viewBox="0 0 16 16"><path d="M8 1v14M1 8h14" stroke="#000" stroke-width="4"/></svg></button>
      <button class="tab">interesests</button>
    </div>
  </main>

  <div class="splitter"><button class="handle" aria-label="Скрыть"><svg viewBox="0 0 5 8"><path d="M0 0l5 4-5 4z" fill="#fff"/></svg></button></div>

  <aside class="sidebar">
    <button class="side-menu" aria-label="Меню"><svg viewBox="0 0 10 10"><path d="M0 1.500h6M0 3.500h6M0 5.500h6" stroke="#3a4a66"/><path d="M4 6h6L7 9z" fill="#222b3c"/></svg></button>
    <button class="side active" aria-label="Свойства"><svg viewBox="0 0 24 24"><path d="M2 4l3 3 3-1V3L6 1c4-1 7 2 5.500 6l6 7c4-1 6 2 5.500 5.500l-2.500-2-2.500 1v2.500l2 2c-4 1-7-2-5.500-6L8.500 10C4 11 1 8 2 4z" fill="#f0f0f0" stroke="#888"/></svg></button>
    <button class="side" aria-label="Стили"><svg viewBox="0 0 24 24"><path d="M3 1h18v5h-2l-1-2h-3.500v12H17v2H9v-2h2V4H6L5 6H3z" fill="url(#g-dark)" stroke="#333" stroke-width=".6"/><path d="M.8 7.500v15.200H21z" fill="#8ae04a" stroke="#3f9210" stroke-width="1.300"/><path d="M4.500 15v4.500h5.500z" fill="#e8fbd8" stroke="#3f9210"/></svg></button>
    <button class="side" aria-label="Галерея"><svg viewBox="0 0 24 24"><path d="M7 5l5-4 5 4" fill="none" stroke="#888" stroke-width="1.500"/><path d="M2 5.500h20v13.500H2z" fill="url(#g-sunset)" stroke="#b26a0a" stroke-width="2.400"/><circle cx="9" cy="15" r="2.500" fill="#fff6a8"/><path d="M15 17.500c0-4-1-5-3-7M15 14c0-3 2-3 3-6" stroke="#2b1d10" fill="none"/></svg></button>
    <button class="side" aria-label="Навигатор"><svg viewBox="0 0 24 24"><circle cx="12" cy="12" r="10" fill="#f6f6f6" stroke="#777" stroke-width="2"/><circle cx="12" cy="12" r="8" fill="#fff" stroke="#bbb"/><path d="M7 7l7 3.500-3.500 3.500z" fill="#dc2424"/><path d="M17 17l-3-6.500-3.500 3.500z" fill="#3465a4"/></svg></button>
    <button class="side" aria-label="Функции"><svg><use href="#i-fx"/></svg></button>
  </aside>
</div>

<div class="findbar">
  <span class="grip"></span>
  <button class="tool" aria-label="Закрыть панель"><svg viewBox="0 0 24 24"><path d="M6 6l12 12M18 6L6 18" stroke="#777975" stroke-width="5.500" stroke-linecap="round"/><path d="M6.500 6.500l11 11M17.500 6.500l-11 11" stroke="#a5a7a3" stroke-width="2"/></svg></button>
  <span class="combo find"><input type="text" placeholder="Найти" aria-label="Найти"><button class="combo-btn" aria-label="История поиска"><svg><use href="#i-chevron"/></svg></button></span>
  <button class="tool" aria-label="Найти предыдущее" disabled><svg viewBox="0 0 24 24"><path d="M3 11l9-9 9 9M7 12l5-5 5 5M12 11l2 2-2 2-2-2zM12 16l1.500 1.500L12 19l-1.500-1.500z" fill="none" stroke="#dadada" stroke-width="1.300"/></svg></button>
  <button class="tool" aria-label="Найти следующее" disabled><svg viewBox="0 0 24 24"><path d="M3 12l9 9 9-9M7 11l5 5 5-5M12 8l2 2-2 2-2-2zM12 3l1.500 1.500L12 6l-1.500-1.500z" fill="none" stroke="#dadada" stroke-width="1.300"/></svg></button>
  <button class="find-all">Найти все</button>
  <label class="check"><input type="checkbox"><span><u>У</u>читывать формат</span></label>
  <label class="check"><input type="checkbox"><span>Учитывать <u>р</u>егистр</span></label>
  <span class="sep"></span>
  <button class="tool" aria-label="Найти и заменить"><svg><use href="#i-find"/></svg></button>
  <span class="sep"></span>
</div>

<footer class="status">
  <span class="cell sheet-no">Лист 1 из 1</span>
  <span class="cell blank"></span>
  <span class="cell style">Базовый</span>
  <span class="cell lang"></span>
  <span class="cell mark"><svg viewBox="0 0 16 16"><path d="M1 5h9v7H1z" fill="#8a8a8a"/><path d="M12 2.500h1.500v11H12M13.500 2.500H15M13.500 13.500H15" fill="none" stroke="#8a8a8a"/></svg></span>
  <span class="cell mark"><svg viewBox="0 0 16 16"><path d="M11 1.500H3.500v12H11M11 1.500v2M11 11v2.500" fill="none" stroke="#8a8a8a"/><path d="M11 4.500v6M8.500 6l5 3M13.500 6l-5 3" stroke="#c01818" stroke-width="1.500"/></svg></span>
  <span class="cell mark"></span>
  <span class="cell sum">Среднее значение: 2380; Сумма: 2380</span>
  <span class="cell zoom"><button aria-label="Уменьшить"><svg viewBox="0 0 8 8"><path d="M0 4h8" stroke="#8c8c8c" stroke-width="2"/></svg></button><input type="range" aria-label="Масштаб" value="50"><button aria-label="Увеличить"><svg viewBox="0 0 8 8"><path d="M0 4h8M4 0v8" stroke="#8c8c8c" stroke-width="2"/></svg></button></span>
  <span class="cell percent-value">100 %</span>
</footer>
</body>
</html>
```

FILE: styles.css
```css
* { box-sizing: border-box; }

body {
  margin: 0;
  height: 100vh;
  display: flex;
  flex-direction: column;
  overflow: hidden;
  background: #f0f0f0;
  color: #000;
  font: 17px/24px "Open Sans", "Noto Sans", sans-serif;
}

button, input, select {
  font: inherit;
  color: inherit;
  margin: 0;
  padding: 0;
  border: 0;
  background: none;
  border-radius: 0;
  outline: 0;
}

svg { display: block; }
.defs { position: absolute; width: 0; height: 0; }
u { text-decoration: underline; text-underline-offset: 3px; text-decoration-thickness: 1px; text-decoration-skip-ink: none; }

/* Title, menu and toolbars */
.top {
  flex: none;
  background: linear-gradient(#fff 24%, #fafafa 70%, #efefef);
  border-bottom: 1px solid #ababb0;
}

.titlebar { display: flex; align-items: center; height: 34px; padding: 0 2px 0 3px; }
.app-icon { width: 22px; height: 26px; }
.title { flex: 1; margin: 0 0 0 6px; font-size: 17px; font-weight: 400; }
.win { width: 70px; height: 34px; display: grid; place-items: center; }
.win svg { width: 16px; height: 16px; }

.menubar { display: flex; gap: 1px; height: 34px; padding-left: 1px; }
.menubar button { padding: 0 11px; }

.toolbar { display: flex; align-items: center; height: 32px; padding-left: 3px; }
.toolbar.format { height: 42px; padding-top: 4px; }
.grip {
  width: 3px;
  height: 22px;
  margin-right: 5px;
  background: repeating-linear-gradient(#999 0 2px, transparent 2px 4px);
}
.tool { width: 33px; height: 30px; display: grid; place-items: center; flex: none; }
.tool svg { width: 24px; height: 24px; }
.drop { width: 11px; height: 30px; display: grid; place-items: center; flex: none; }
.drop svg { width: 5px; height: 3px; }
.drop:disabled { opacity: .4; }
.sep { flex: none; width: 1px; height: 18px; margin: 0 3px 0 4px; background: #c2c2c2; }

.abc { font: bold 12px "Open Sans", sans-serif; fill: #2e3436; }
.dec { font: bold 9px "Open Sans", sans-serif; fill: #2e3436; }
.tiny { font: bold 9px "Open Sans", sans-serif; fill: #444; }
.bars { fill: none; stroke: #4a4b48; stroke-width: 2.4; }
.valign { fill: #f6f6f6; stroke: #b4b4b4; }

.glyph { font: bold 26px/24px "DejaVu Serif", serif; color: #555753; align-content: center; }
.bold, .italic { height: 34px; align-content: start; }
.italic { font-style: italic; }
.under { height: 34px; align-content: start; text-decoration: underline double; text-decoration-thickness: 1px; text-underline-offset: 2px; }
.color { color: #4a7dbd; background: linear-gradient(#800000, #800000) 50% 22px / 24px 6px no-repeat; line-height: 18px; height: 33px; align-content: start; }
.percent { font-size: 22px; color: #2e3436; }
.number { font-size: 16px; font-weight: 700; color: #2e3436; }

/* Boxes with a drop-down button */
.combo {
  flex: none;
  display: flex;
  height: 33px;
  padding: 1px;
  background: #fff;
  border: 1px solid #abadb3;
}
.combo select, .combo input { flex: 1; min-width: 0; appearance: none; padding: 2px 0 0 3px; }
.combo input::placeholder { color: #8a8a8a; opacity: 1; }
.combo-btn {
  width: 26px;
  display: grid;
  place-items: center;
  background: #e1e1e1;
  border: 1px solid #adadad;
}
.combo-btn svg { width: 12px; height: 8px; }
.font-name { width: 212px; margin: 0 8px 0 1px; }
.font-size { width: 68px; }

/* Document area */
.workspace { flex: 1; min-height: 0; display: flex; border-bottom: 1px solid #aaa; }
.document { flex: 1; min-width: 0; display: flex; flex-direction: column; }

.formula-bar {
  flex: none;
  display: flex;
  align-items: center;
  height: 36px;
  padding-right: 6px;
  border-bottom: 1px solid #a0a0a0;
}
.name-box { width: 187px; }
.formula { flex: 1; min-width: 0; height: 33px; padding: 2px 0 0 3px; background: #fff; border: 1px solid #abadb3; }
.expand { width: 18px; height: 31px; margin-left: 3px; display: grid; place-items: center; background: #e1e1e1; border: 1px solid #adadad; }
.expand svg { width: 10px; height: 6px; }

.sheet { flex: 1; min-height: 0; display: flex; }
.cells { flex: 1; min-width: 0; overflow: hidden; background: #fff; }
.cells table { table-layout: fixed; width: 1889px; border-collapse: separate; border-spacing: 0; }
.c-head { width: 45px; }
.c-a { width: 59px; }
.c-b { width: 910px; }
.c-n { width: 125px; }

.cells th {
  height: 25px;
  padding: 2px 0 0;
  font-size: 16px;
  font-weight: 400;
  line-height: 22px;
  text-align: center;
  border-right: 1px solid #666;
  border-bottom: 1px solid #666;
}
.cells tbody th { background: linear-gradient(90deg, #f7f7f7 21px, #efefef 21px); }
.cells thead th { height: 28px; background: linear-gradient(#f5f5f5 13px, #efefef 13px); }
.cells thead .selected { font-weight: 700; color: #fff; background: linear-gradient(#80bfff 13px, #39f 13px); border-color: #2f80d8; }
.cells td {
  height: 25px;
  padding: 2px 0 0 1px;
  font: 20px/22px "Liberation Sans", Arial, sans-serif;
  white-space: nowrap;
  border-right: 1px solid #c0c0c0;
  border-bottom: 1px solid #c0c0c0;
}
.cells td:nth-child(2) { text-align: right; }
.cells s { text-decoration: underline wavy #f00 1px; text-underline-offset: 1px; text-decoration-skip-ink: none; }

.vscroll { flex: none; width: 26px; display: flex; flex-direction: column; }
.vscroll .thumb { width: 24px; height: 16px; margin-left: 1px; background: #cdcdcd; }
.vscroll .track { flex: 1; }
.vscroll .scroll-btn { width: 26px; height: 27px; }
.vsplit { height: 5px; background: linear-gradient(#000, #000) 6px 2px / 14px 1px no-repeat #999; }
.scroll-btn { width: 25px; height: 24px; display: grid; place-items: center; }
.scroll-btn svg { width: 12px; height: 12px; }

.hscroll { flex: none; display: flex; align-items: center; height: 25px; padding-right: 26px; }
.hscroll .track { flex: 1; height: 24px; display: flex; }
.hscroll .thumb { width: 44.400%; background: #cdcdcd; }
.hsplit { width: 5px; height: 25px; background: linear-gradient(#000, #000) 2px 6px / 1px 14px no-repeat #999; }

.tabs { flex: none; display: flex; align-items: center; height: 24px; padding-left: 8px; }
.nav { width: 22px; height: 24px; padding-top: 1px; display: grid; place-items: center; }
.nav svg { width: 12px; height: 14px; }
.add { width: 37px; height: 24px; padding-top: 1px; display: grid; place-items: center; }
.add svg { width: 16px; height: 16px; }
.tab { align-self: flex-start; height: 23px; width: 114px; background: #fff; border: 1px solid #555; border-top: 0; font-size: 15px; line-height: 22px; font-weight: 700; }

.splitter { width: 7px; display: flex; align-items: center; border: solid #999; border-width: 1px 1px 0; }
.handle { width: 7px; height: 73px; margin: 0 -1px; flex: none; display: grid; place-items: center; background: #666; }
.handle svg { width: 5px; height: 8px; }

.sidebar { width: 40px; display: flex; flex-direction: column; align-items: center; border-top: 1px solid #999; }
.side-menu { width: 22px; height: 39px; margin-bottom: 3px; display: grid; place-items: center; border-bottom: 1px solid #d8d8d8; }
.side-menu svg { width: 10px; height: 10px; }
.side { width: 32px; height: 34px; display: grid; place-items: center; }
.side svg { width: 24px; height: 24px; }
.side.active { height: 32px; margin-bottom: 3px; border: 1px solid #b5b5b5; border-radius: 4px; }

/* Find toolbar */
.findbar { flex: none; display: flex; align-items: center; height: 38px; padding-left: 3px; }
.find { width: 250px; margin-left: 1px; }
.find-all { padding: 4px 7px 0 3px; }
.check { display: flex; align-items: center; gap: 4px; margin-top: -10px; }
.check input { appearance: none; width: 13px; height: 13px; background: #fff; border: 1px solid #333; }

/* Status bar */
.status { flex: none; display: flex; align-items: center; height: 31px; border-top: 1px solid #a0a0a0; }
.cell { height: 25px; line-height: 26px; border-right: 1px solid #a8a8a8; white-space: nowrap; }
.sheet-no { width: 254px; padding-left: 13px; }
.blank { width: 433px; }
.style { width: 233px; padding-left: 11px; }
.lang { width: 71px; }
.mark { width: 32px; display: grid; place-items: center; }
.mark svg { width: 16px; height: 16px; }
.sum { flex: 1; text-align: center; }
.zoom { width: 146px; display: flex; align-items: center; justify-content: center; gap: 6px; }
.zoom svg { width: 8px; height: 8px; }
.zoom input { appearance: none; width: 100px; height: 2px; background: #999; }
.zoom input::-webkit-slider-thumb { appearance: none; width: 8px; height: 8px; border: 1px solid #808080; border-radius: 50%; background: #fff; }
.percent-value { width: 70px; padding-left: 10px; border-right: 0; }
```
